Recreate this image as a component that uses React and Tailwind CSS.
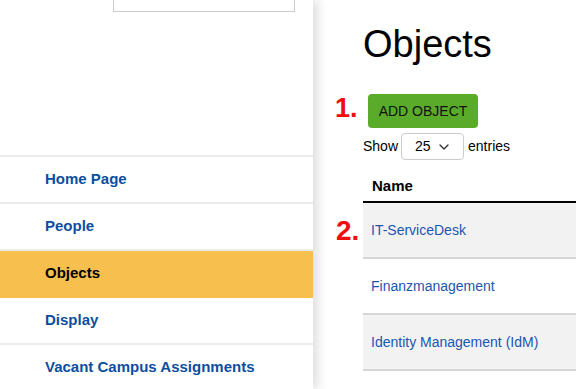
import { ChevronDown } from "lucide-react";

const navItems = ["Home Page", "People", "Objects", "Display", "Vacant Campus Assignments"];

const rows = ["IT-ServiceDesk", "Finanzmanagement", "Identity Management (IdM)"];

export default function App() {
	return (
		<div className="flex h-[389px] w-[576px] overflow-hidden bg-white font-['Liberation_Sans',Arial,sans-serif]">
			<aside className="relative z-10 w-[313px] shrink-0 bg-white shadow-[5px_0_10px_rgba(0,0,0,0.13)]">
				<div className="ml-[113px] h-[12px] w-[182px] border border-t-0 border-[#cccccc]" />
				<nav className="mt-[143px] border-t-2 border-[#ebebeb]">
					{navItems.map((item) => (
						<div
							key={item}
							className={`flex h-[47px] items-center border-b-2 pl-[45px] text-[15px] font-bold ${
								item === "Objects"
									? "border-[#f7c04e] bg-[#f7c04e] text-black"
									: "border-[#ebebeb] text-[#0d4e9f]"
							}`}
						>
							{item}
						</div>
					))}
				</nav>
			</aside>

			<main className="flex-1 pl-[50px] text-black">
				<h1 className="mt-[22px] h-[44px] text-[38px] leading-[44px]">Objects</h1>
				<div className="relative mt-[28px] ml-[5px]">
					<span className="absolute left-[-33px] top-[-6px] text-[27px] font-bold text-[#f20d0d]">1.</span>
					<button className="h-[34px] w-[110px] rounded-[4px] bg-[#5aab2a] text-[14px] text-[#111]">
						ADD OBJECT
					</button>
				</div>
				<div className="mt-[5px] flex items-center text-[14px]">
					<span>Show</span>
					<div className="ml-[3px] flex h-[27px] w-[63px] items-center justify-between rounded-[4px] border border-[#cccccc] pl-[13px] pr-[11px]">
						<span>25</span>
						<ChevronDown size={16} strokeWidth={2} className="text-[#333]" />
					</div>
					<span className="ml-[4px]">entries</span>
				</div>

				<div className="mt-[15px]">
					<div className="flex h-[28px] items-start border-b-2 border-black pl-[9px] text-[15px] font-bold">
						Name
					</div>
					{rows.map((row, i) => (
						<div
							key={row}
							className={`relative flex h-[56px] items-center border-b-2 border-[#d6d6d6] pl-[8px] text-[14px] text-[#1a56b0] ${
								i % 2 === 0 ? "bg-[#f2f2f2]" : "bg-white"
							}`}
						>
							{i === 0 && (
								<span className="absolute left-[-27px] top-[7px] text-[28px] font-bold text-[#f20d0d]">2.</span>
							)}
							{row}
						</div>
					))}
				</div>
			</main>
		</div>
	);
}
